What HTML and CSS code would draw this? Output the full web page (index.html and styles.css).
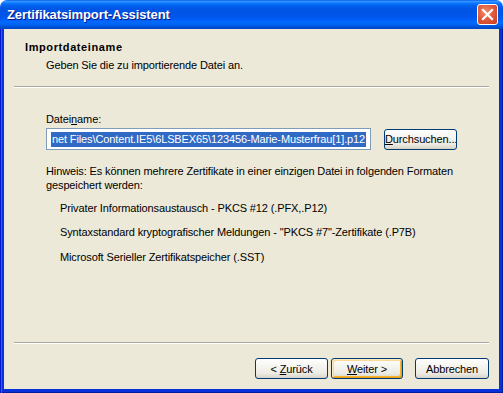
FILE: index.html
```html
<!DOCTYPE html>
<html lang="de">
<head>
<meta charset="utf-8">
<title>Zertifikatsimport-Assistent</title>
<link rel="stylesheet" href="styles.css">
</head>
<body>
<div class="window">
  <div class="titlebar">
    <span class="title">Zertifikatsimport-Assistent</span>
    <span class="close">
      <svg width="13" height="13" viewBox="0 0 13 13"><path d="M2 2 L11 11 M11 2 L2 11" stroke="#fff" stroke-width="2.2" stroke-linecap="square"/></svg>
    </span>
  </div>
  <div class="frame">
    <div class="client">
      <div class="header">
        <div class="h-title">Importdateiname</div>
        <div class="h-sub">Geben Sie die zu importierende Datei an.</div>
      </div>
      <div class="sep"></div>
      <div class="content">
        <div class="label">Datei<u>n</u>ame:</div>
        <div class="row">
          <div class="field"><span class="sel">net Files\Content.IE5\6LSBEX65\123456-Marie-Musterfrau[1].p12</span></div>
          <button class="btn browse"><u>D</u>urchsuchen...</button>
        </div>
        <p class="hint">Hinweis: Es können mehrere Zertifikate in einer einzigen Datei in folgenden Formaten gespeichert werden:</p>
        <div class="fmt f1">Privater Informationsaustausch - PKCS #12 (.PFX,.P12)</div>
        <div class="fmt f2">Syntaxstandard kryptografischer Meldungen - "PKCS #7"-Zertifikate (.P7B)</div>
        <div class="fmt f3">Microsoft Serieller Zertifikatspeicher (.SST)</div>
      </div>
      <div class="sep"></div>
      <div class="footer">
        <button class="btn back">&lt; <u>Z</u>urück</button>
        <button class="btn default"><u>W</u>eiter &gt;</button>
        <button class="btn cancel">Abbrechen</button>
      </div>
    </div>
  </div>
</div>
</body>
</html>
```
FILE: styles.css
```css
* { box-sizing: border-box; }
html, body { margin: 0; padding: 0; background: #fff; }
body { font-family: "Liberation Sans", Arial, sans-serif; font-size: 11px; color: #000; letter-spacing: -0.12px; }
.window { width: 503px; height: 393px; display: flex; flex-direction: column; }
.titlebar {
  height: 29px; flex: none;
  border-radius: 7px 7px 0 0;
  background: linear-gradient(to bottom, #0058ee 0%, #3593ff 4%, #288eff 7%, #127dff 10%, #036ffc 14%, #0262ee 20%, #0057e5 28%, #0054e3 40%, #0055eb 56%, #005bf5 66%, #026afe 76%, #0062ef 86%, #0052d6 92%, #0046c4 100%);
  display: flex; align-items: center; justify-content: space-between;
  padding: 0 5px 0 7px;
}
.title {
  color: #fff; font-family: "Liberation Sans", Arial, sans-serif; font-weight: bold; font-size: 13px;
  text-shadow: 1px 1px 0 #0a1883; letter-spacing: -0.1px;
}
.close {
  width: 21px; height: 21px; border: 1px solid #fff; border-radius: 3px;
  background: radial-gradient(circle at 40% 35%, #f08a6a 0%, #e0593a 50%, #c83a1c 100%);
  display: flex; align-items: center; justify-content: center;
}
.close svg { display: block; }
.frame {
  flex: 1; display: flex;
  background: #0831d9;
  padding: 0 4px 4px 4px;
  box-shadow: inset 1px 0 #0019cf, inset 2px 0 #166aee, inset -1px 0 #001ea0, inset 0 -1px #001ea0;
}
.client {
  flex: 1; background: #ece9d8; display: flex; flex-direction: column;
}
.header { padding: 11px 0 0 21px; height: 57px; flex: none; }
.h-title { font-weight: bold; line-height: 14px; letter-spacing: 0.6px; }
.h-sub { line-height: 14px; margin-top: 4px; padding-left: 21px; }
.sep { margin: 0 10px; height: 2px; border-top: 1px solid #aca899; border-bottom: 1px solid #fff; flex: none; }
.content { flex: 1; padding: 24px 0 0 42px; }
.label { line-height: 14px; }
.row { display: flex; align-items: center; margin-top: 2px; }
.field {
  flex: none; width: 325px; height: 22px; background: #fff; border: 1px solid #7f9db9;
  padding: 2px 2px 2px 4px; overflow: hidden; white-space: nowrap; display: flex; align-items: center;
}
.sel { background: #316ac5; color: #fff; line-height: 15px; padding: 0 1px; }
.browse { flex: none; width: 83px; height: 21px; margin-left: 13px; }
.hint { margin: 14px 0 0; line-height: 14px; width: 420px; }
.fmt { line-height: 14px; padding-left: 14px; }
.f1 { margin-top: 9px; }
.f2 { margin-top: 10px; }
.f3 { margin-top: 11px; }
.footer { height: 45px; flex: none; display: flex; justify-content: flex-end; align-items: flex-start; padding: 14px 10px 0 0; }
.btn {
  font-family: inherit; font-size: 11px; color: #000; letter-spacing: -0.12px;
  flex: none; width: 73px; height: 21px; padding: 0;
  border: 1px solid #003c74; border-radius: 3px;
  background: linear-gradient(to bottom, #ffffff 0%, #f5f4ef 40%, #ecebe4 75%, #e0ddd2 90%, #d6d0c5 100%);
}
.default { width: 72px; margin-left: 3px; box-shadow: inset 1px 1px 0 #ffeac0, inset -1px -1px 0 #e5a01a, inset 2px 2px 0 #fcd995, inset -2px -2px 0 #f8b330; }
.cancel { width: 74px; margin-left: 12px; }
```
